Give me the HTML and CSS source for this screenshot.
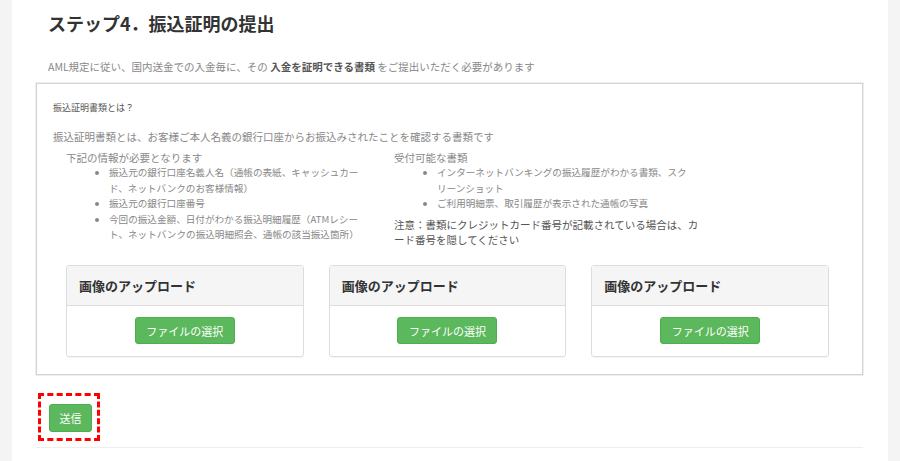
FILE: index.html
```html
<!DOCTYPE html>
<html lang="ja">

<head>
    <meta charset="UTF-8">
    <meta name="viewport" content="width=device-width, initial-scale=1.0">
    <title>ステップ4. 振込証明の提出</title>
    <link rel="stylesheet" href="styles.css">
</head>

<body>
    <div class="page">
        <h2 class="step-title">ステップ4．振込証明の提出</h2>
        <p class="lead">AML規定に従い、国内送金での入金毎に、その <b>入金を証明できる書類</b> をご提出いただく必要があります</p>

        <div class="proof-box">
            <p class="proof-head">振込証明書類とは？</p>
            <p class="proof-desc">振込証明書類とは、お客様ご本人名義の銀行口座からお振込みされたことを確認する書類です</p>

            <div class="cols">
                <div class="col col-left">
                    <p>下記の情報が必要となります</p>
                    <ul>
                        <li>振込元の銀行口座名義人名（通帳の表紙、キャッシュカー<br>ド、ネットバンクのお客様情報）</li>
                        <li>振込元の銀行口座番号</li>
                        <li>今回の振込金額、日付がわかる振込明細履歴（ATMレシー<br>ト、ネットバンクの振込明細照会、通帳の該当振込箇所）</li>
                    </ul>
                </div>
                <div class="col col-right">
                    <p>受付可能な書類</p>
                    <ul>
                        <li>インターネットバンキングの振込履歴がわかる書類、スク<br>リーンショット</li>
                        <li>ご利用明細票、取引履歴が表示された通帳の写真</li>
                    </ul>
                    <p class="note">注意：書類にクレジットカード番号が記載されている場合は、カ<br>ード番号を隠してください</p>
                </div>
            </div>

            <div class="uploads">
                <div class="upload-card">
                    <div class="upload-head">画像のアップロード</div>
                    <div class="upload-body"><button class="btn-green btn-file" type="button">ファイルの選択</button></div>
                </div>
                <div class="upload-card">
                    <div class="upload-head">画像のアップロード</div>
                    <div class="upload-body"><button class="btn-green btn-file" type="button">ファイルの選択</button></div>
                </div>
                <div class="upload-card">
                    <div class="upload-head">画像のアップロード</div>
                    <div class="upload-body"><button class="btn-green btn-file" type="button">ファイルの選択</button></div>
                </div>
            </div>
        </div>

        <div class="send-mark">
            <button class="btn-green btn-send" type="button">送信</button>
        </div>
        <div class="bottom-line"></div>
    </div>
</body>

</html>
```

FILE: styles.css
```css
* {
    margin: 0;
    padding: 0;
    box-sizing: border-box;
}

body {
    background-color: #f4f4f4;
    font-family: "Noto Sans CJK JP", "Noto Sans", sans-serif;
    color: #888;
    font-size: 10.5px;
    line-height: 15px;
}

.page {
    margin: 0 12px 0 12px;
    height: 461px;
    background-color: #fff;
    padding: 11px 25px 0 24px;
}

.step-title {
    font-size: 18px;
    line-height: 24px;
    font-weight: bold;
    color: #333;
    padding-left: 12px;
}

.lead {
    margin-top: 24px;
    padding-left: 12px;
}

.lead b {
    color: #555;
}

.proof-box {
    margin-top: 9px;
    border: 1px solid #d4d4d4;
    box-shadow: 0 0 0 1px #eee;
    padding: 16px 16px 17px 16px;
}

.proof-head {
    font-size: 9px;
    color: #555;
    margin-bottom: 14px;
}

.proof-desc {
    margin-bottom: 6px;
}

.cols {
    display: grid;
    grid-template-columns: 328px 330px;
    padding-left: 13px;
}

.cols ul {
    padding-left: 43px;
    font-size: 9.6px;
    line-height: 15.5px;
    white-space: nowrap;
}

.note {
    margin-top: 5.5px;
    color: #555;
    white-space: nowrap;
}

.uploads {
    display: grid;
    grid-template-columns: repeat(3, 1fr);
    column-gap: 25px;
    margin: 18px 17px 0 13px;
}

.upload-card {
    border: 1px solid #ddd;
    border-radius: 3px;
    height: 92px;
    box-shadow: 0 1px 1px rgba(0, 0, 0, 0.04);
}

.upload-head {
    height: 40px;
    background-color: #f5f5f5;
    border-bottom: 1px solid #ddd;
    padding-left: 12px;
    font-size: 13px;
    font-weight: bold;
    color: #333;
    line-height: 39px;
}

.upload-body {
    display: flex;
    justify-content: center;
    padding-top: 11px;
}

.btn-green {
    background-color: #5cb85c;
    color: #fff;
    border: 1px solid #4cae4c;
    border-radius: 3px;
    font-family: inherit;
}

.btn-file {
    width: 100px;
    height: 27px;
    font-size: 11px;
}

.send-mark {
    margin: 18px 0 0 2px;
    width: 62px;
    height: 48px;
    border: 3px dashed #f00;
    padding: 8px 0 0 8px;
}

.btn-send {
    width: 43px;
    height: 28px;
    font-size: 11px;
}

.bottom-line {
    margin-top: 6px;
    border-top: 1px solid #eee;
}
```
